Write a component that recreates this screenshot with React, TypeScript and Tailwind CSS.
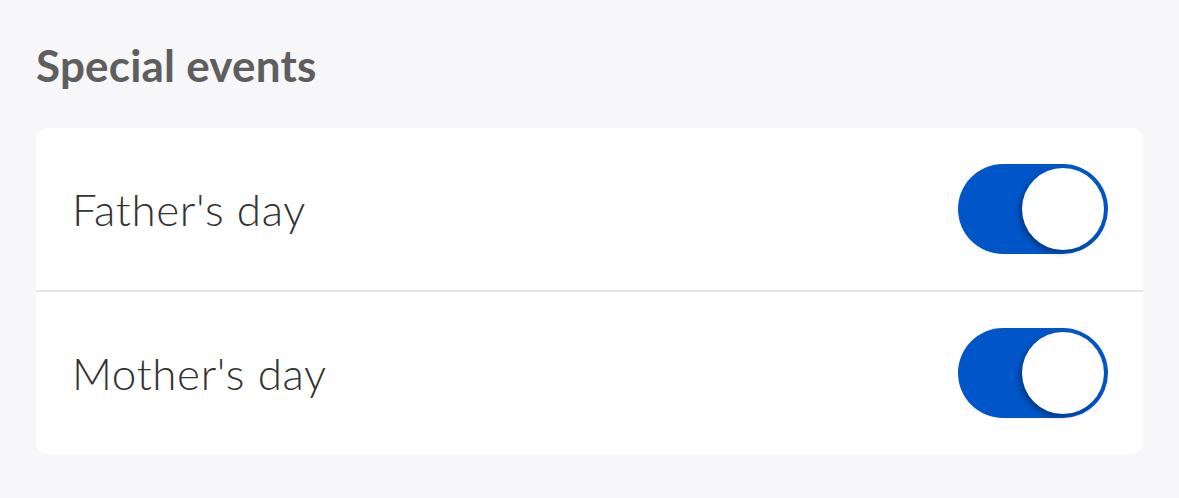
import React, { useState } from 'react';

interface EventRow {
  id: string;
  label: string;
}

const events: EventRow[] = [
  { id: 'father', label: "Father's day" },
  { id: 'mother', label: "Mother's day" },
];

function Toggle({ on, onClick }: { on: boolean; onClick: () => void }) {
  return (
    <button
      onClick={onClick}
      className={`flex h-[90px] w-[150px] items-center rounded-full p-[4px] ${
        on ? 'justify-end bg-[#0055c8]' : 'justify-start bg-[#cfd2d8]'
      }`}
    >
      <span className="block h-[82px] w-[82px] rounded-full bg-white shadow-[-3px_3px_5px_rgba(0,0,0,0.3)]" />
    </button>
  );
}

export default function App() {
  const [enabled, setEnabled] = useState<Record<string, boolean>>({ father: true, mother: true });

  return (
    <div
      className="h-[498px] w-[1179px] bg-[#f7f7f9] px-[36px] pt-[38px]"
      style={{ fontFamily: 'Lato, "Open Sans", sans-serif' }}
    >
      <h2 className="mb-[36px] text-[44px] font-bold leading-[54px] tracking-[0.2px] text-[#5e5e5e]">
        Special events
      </h2>

      <div className="overflow-hidden rounded-[12px] bg-white">
        {events.map((ev, i) => (
          <div key={ev.id}>
            {i > 0 && <div className="h-[2px] bg-[#e6e6e8]" />}
            <div className="flex h-[162px] items-center justify-between pl-[36px] pr-[35px]">
              <span className="text-[44px] font-light tracking-[0.6px] text-[#333333]">{ev.label}</span>
              <Toggle
                on={enabled[ev.id]}
                onClick={() => setEnabled((prev) => ({ ...prev, [ev.id]: !prev[ev.id] }))}
              />
            </div>
          </div>
        ))}
      </div>
    </div>
  );
}
